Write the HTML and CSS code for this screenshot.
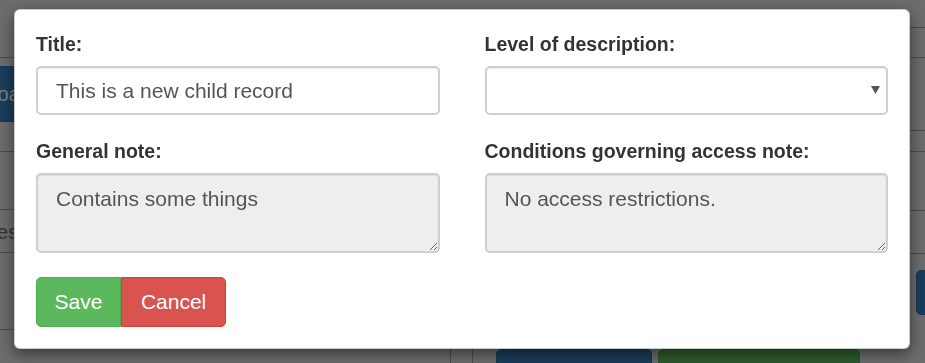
FILE: index.html
```html
<!DOCTYPE html>
<html lang="en">
<head>
<meta charset="utf-8">
<title>Add child record</title>
<link rel="stylesheet" href="styles.css">
</head>
<body>
<div class="page">
  <header class="topbar"><div class="topbar-right"></div></header>
  <div class="columns">
    <section class="left-pane">
      <div class="left-inner">
        <button class="bg-btn bg-blue download">Download</button>
        <div class="bg-row r1"></div>
        <div class="bg-row r2"></div>
        <div class="bg-row r3"><span class="cell">Notes</span></div>
        <div class="bg-row r4"></div>
      </div>
    </section>
    <section class="right-pane">
      <div class="bg-row q1"></div>
      <div class="bg-row q2"></div>
      <div class="bg-row q3"></div>
      <div class="bg-row q4"></div>
      <div class="side-actions"><button class="bg-btn bg-blue side-btn">Edit</button></div>
      <div class="bottom-actions">
        <button class="bg-btn bg-blue delete">Delete selected</button>
        <button class="bg-btn bg-green finalize">Finalize arrangement</button>
      </div>
    </section>
  </div>
</div>
<div class="backdrop"></div>
<div class="modal">
  <form class="modal-body">
    <div class="grid">
      <div class="field">
        <label class="label" for="title">Title:</label>
        <input class="control" id="title" type="text" value="This is a new child record">
      </div>
      <div class="field">
        <label class="label" for="level">Level of description:</label>
        <div class="select-wrap">
          <select class="control select" id="level"><option></option></select>
          <svg class="caret" width="9" height="8" viewBox="0 0 9 8"><path d="M0 0H9L4.5 8Z" fill="#555"/></svg>
        </div>
      </div>
      <div class="field">
        <label class="label" for="note">General note:</label>
        <textarea class="control area" id="note" readonly>Contains some things</textarea>
      </div>
      <div class="field">
        <label class="label" for="access">Conditions governing access note:</label>
        <textarea class="control area" id="access" readonly>No access restrictions.</textarea>
      </div>
    </div>
    <div class="btn-group">
      <button type="button" class="btn btn-save">Save</button>
      <button type="button" class="btn btn-cancel">Cancel</button>
    </div>
  </form>
</div>
</body>
</html>
```
FILE: styles.css
```css
* { box-sizing: border-box; }
html, body { margin: 0; padding: 0; }
body {
  font-family: "Liberation Sans", Arial, sans-serif;
  color: #333;
  width: 925px;
  height: 363px;
  overflow: hidden;
}

/* page behind the modal */
.page {
  width: 925px;
  height: 363px;
  overflow: hidden;
  background: #d9d9d9;
}
.topbar {
  height: 58px;
  border-bottom: 1px solid #9a9a9a;
  display: flex;
  justify-content: flex-end;
}
.topbar-right {
  width: 60px;
  height: 28px;
  border-bottom: 1px solid #9a9a9a;
}
.columns {
  display: flex;
  gap: 21px;
}
.left-pane {
  flex: 0 0 451px;
  width: 451px;
  height: 305px;
  border-right: 1px solid #9a9a9a;
  overflow: hidden;
}
.left-inner {
  margin-left: -50px;
  padding-top: 8px;
}
.bg-btn {
  font-family: "Liberation Sans", Arial, sans-serif;
  font-size: 20px;
  color: #fff;
  border: 1px solid transparent;
  border-radius: 5px;
  padding: 0 18px;
  display: block;
  white-space: nowrap;
}
.bg-blue { background: #337ab7; border-color: #2e6da4; }
.bg-green { background: #5cb85c; border-color: #4cae4c; }
.download { height: 56px; margin-left: -27px; }
.bg-row { border-bottom: 1px solid #9a9a9a; display: flex; align-items: center; }
.r1 { height: 30px; }
.r2 { height: 58px; }
.r3 { height: 43px; padding-top: 3px; }
.r4 { height: 77px; }
.cell { padding-left: 16px; font-size: 20px; color: #666; }

.right-pane {
  flex: 1 1 0;
  min-width: 0;
  height: 305px;
  border-left: 1px solid #9a9a9a;
  overflow: hidden;
}
.q1 { height: 73px; }
.q2 { height: 21px; }
.q3 { height: 59px; }
.q4 { height: 43px; }
.side-actions { padding: 16px 0 0 443px; }
.side-btn { height: 45px; width: 80px; }
.bottom-actions {
  display: flex;
  gap: 6px;
  padding: 34px 0 0 23px;
}
.delete { height: 46px; width: 156px; padding-top: 4px; }
.finalize { height: 46px; width: 202px; padding-top: 4px; }

.backdrop {
  position: fixed;
  inset: 0;
  background: rgba(0, 0, 0, 0.5);
}

/* modal */
.modal {
  position: fixed;
  top: 9px;
  left: 14px;
  width: 896px;
  background: #fff;
  border: 1px solid rgba(0, 0, 0, 0.2);
  border-radius: 6px;
  box-shadow: 0 5px 15px rgba(0, 0, 0, 0.5);
}
.modal-body {
  margin: 0;
  padding: 20px 21px 21px;
}
.grid {
  display: grid;
  grid-template-columns: 1fr 1fr;
  column-gap: 45px;
  row-gap: 22px;
}
.field { display: flex; flex-direction: column; }
.label {
  font-size: 19.5px;
  font-weight: bold;
  line-height: 28px;
  margin-bottom: 8px;
  color: #333;
}
.control {
  font-family: "Liberation Sans", Arial, sans-serif;
  font-size: 21px;
  line-height: 30px;
  color: #555;
  width: 100%;
  height: 49px;
  padding: 7px 18px;
  background: #fff;
  border: 2px solid #cfcfcf;
  border-radius: 5px;
  box-shadow: inset 0 1px 1px rgba(0, 0, 0, 0.075);
  margin: 0;
}
.select-wrap { position: relative; }
.select {
  appearance: none;
  -webkit-appearance: none;
}
.caret {
  position: absolute;
  right: 8px;
  top: 20px;
  pointer-events: none;
}
.area {
  height: 80px;
  padding: 9px 18px;
  background: #eee;
  resize: vertical;
  display: block;
}
.btn-group {
  display: flex;
  margin-top: 24px;
}
.btn {
  font-family: "Liberation Sans", Arial, sans-serif;
  font-size: 21px;
  line-height: 30px;
  color: #fff;
  padding: 9px 18px;
  border: 1px solid transparent;
  margin: 0;
}
.btn-save {
  background: #5cb85c;
  border-color: #4cae4c;
  border-radius: 5px 0 0 5px;
  padding-left: 17.5px;
  padding-right: 17.5px;
}
.btn-cancel {
  background: #d9534f;
  border-color: #d43f3a;
  border-radius: 0 5px 5px 0;
  padding-left: 19px;
  padding-right: 19px;
}
```
